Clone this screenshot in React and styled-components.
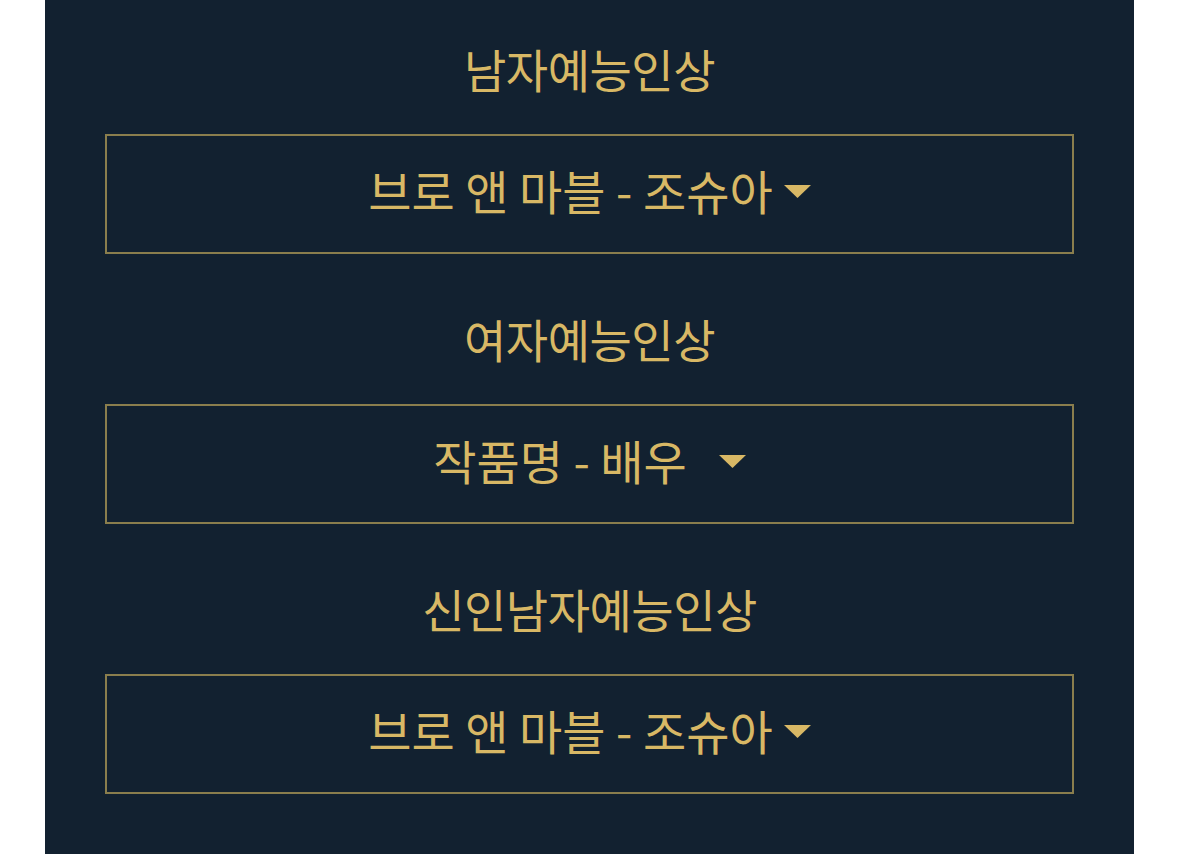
import React from 'react';
import styled, { createGlobalStyle } from 'styled-components';

const GlobalStyle = createGlobalStyle`
  html, body {
    margin: 0;
    padding: 0;
    background: #ffffff;
  }
  body {
    font-family: "Noto Sans CJK KR", "Noto Sans", sans-serif;
  }
`;

const awards = [
  { title: '남자예능인상', pick: '브로 앤 마블 - 조슈아' },
  { title: '여자예능인상', pick: '작품명 - 배우  ' },
  { title: '신인남자예능인상', pick: '브로 앤 마블 - 조슈아' },
];

const VoteSection = ({ title, pick }) => (
  <Section>
    <Title>{title}</Title>
    <SelectBox>
      <Label>{pick}</Label>
      <Caret viewBox="0 0 27 13">
        <polygon points="0,0 27,0 13.5,13" />
      </Caret>
    </SelectBox>
  </Section>
);

const App = () => (
  <>
    <GlobalStyle />
    <Page>
      <Panel>
        {awards.map((a) => (
          <VoteSection key={a.title} title={a.title} pick={a.pick} />
        ))}
      </Panel>
    </Page>
  </>
);

const Page = styled.div`
  min-height: 854px;
  padding-left: 45px;
  display: flex;
`;

const Panel = styled.div`
  width: 1089px;
  min-height: 854px;
  background: #122130;
  padding: 38px 60px 0;
  box-sizing: border-box;
  display: flex;
  flex-direction: column;
`;

const Section = styled.div`
  display: flex;
  flex-direction: column;
  margin-bottom: 54px;
`;

const Title = styled.h2`
  margin: 0 0 36px;
  height: 60px;
  line-height: 60px;
  text-align: center;
  font-size: 46px;
  font-weight: 400;
  letter-spacing: -0.5px;
  color: #d8b865;
`;

const SelectBox = styled.div`
  height: 120px;
  box-sizing: border-box;
  border: 2px solid #8a7e4d;
  padding-bottom: 10px;
  display: flex;
  align-items: center;
  justify-content: center;
  color: #d8b865;
  font-size: 47px;
`;

const Label = styled.span`
  white-space: pre;
  line-height: 1;
`;

const Caret = styled.svg`
  width: 27px;
  height: 13px;
  margin-left: 11px;
  margin-top: 4px;
  fill: #d8b865;
`;

export default App;
